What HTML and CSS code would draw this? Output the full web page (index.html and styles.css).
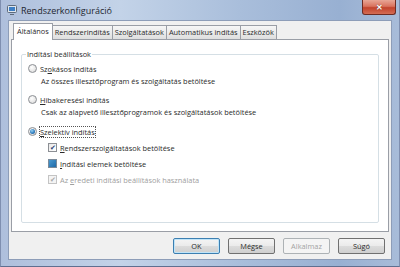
FILE: index.html
```html
<!DOCTYPE html>
<html lang="hu">
<head>
    <meta charset="UTF-8">
    <title>Rendszerkonfiguráció</title>
    <link rel="stylesheet" href="styles.css">
</head>
<body>
    <div class="window">
        <!-- Title bar -->
        <div class="titlebar">
            <svg class="app-icon" width="10" height="10" viewBox="0 0 10 10">
                <rect x="0.5" y="0.5" width="9" height="7" rx="1" fill="#dfe6ee" stroke="#5d6b7c"/>
                <rect x="2" y="2" width="6" height="4" fill="#3d7fc6"/>
                <path d="M3 9.5h4" stroke="#5d6b7c"/>
            </svg>
            <span class="title">Rendszerkonfiguráció</span>
            <div class="close-btn">&#x2715;</div>
        </div>

        <div class="body">
            <!-- Tabs -->
            <div class="tabs">
                <div class="tab active">Általános</div>
                <div class="tab">Rendszerindítás</div>
                <div class="tab">Szolgáltatások</div>
                <div class="tab">Automatikus indítás</div>
                <div class="tab">Eszközök</div>
            </div>

            <div class="panel">
                <fieldset class="group">
                    <legend>Indítási beállítások</legend>

                    <div class="option">
                        <span class="radio"></span>
                        <span>Sz<u>o</u>kásos indítás</span>
                    </div>
                    <div class="desc">Az összes illesztőprogram és szolgáltatás betöltése</div>

                    <div class="option spaced">
                        <span class="radio"></span>
                        <span><u>H</u>ibakeresési indítás</span>
                    </div>
                    <div class="desc">Csak az alapvető illesztőprogramok és szolgáltatások betöltése</div>

                    <div class="option spaced-lg">
                        <span class="radio checked"></span>
                        <span class="focus"><u>S</u>zelektív indítás</span>
                    </div>

                    <div class="sub-options">
                        <div class="option">
                            <span class="check checked">&#x2714;</span>
                            <span><u>R</u>endszerszolgáltatások betöltése</span>
                        </div>
                        <div class="option">
                            <span class="check mixed"></span>
                            <span><u>I</u>ndítási elemek betöltése</span>
                        </div>
                        <div class="option disabled">
                            <span class="check checked">&#x2714;</span>
                            <span>Az <u>e</u>redeti indítási beállítások használata</span>
                        </div>
                    </div>
                </fieldset>
            </div>

            <!-- Dialog buttons -->
            <div class="buttons">
                <button class="btn default">OK</button>
                <button class="btn">Mégse</button>
                <button class="btn" disabled>Alkalmaz</button>
                <button class="btn">Súgó</button>
            </div>
        </div>
    </div>
</body>
</html>
```

FILE: styles.css
```css
html, body {
    margin: 0;
    padding: 0;
}

body {
    font-family: "Open Sans", "Noto Sans", sans-serif;
    font-size: 7.4px;
    color: #2a2a2a;
}

.window {
    width: 400px;
    height: 267px;
    box-sizing: border-box;
    padding: 0 7px 6px 7px;
    display: flex;
    flex-direction: column;
    background: linear-gradient(90deg, #aebfdc 0%, #c3d3e8 30%, #a9bedb 60%, #98b0d2 85%, #a8bcd9 100%);
    border-left: 1px solid #7f8fb0;
    border-right: 1px solid #7f8fb0;
    border-bottom: 1px solid #5f6f90;
}

.titlebar {
    height: 20px;
    display: flex;
    align-items: center;
}

.app-icon {
    margin-left: -1px;
    margin-right: 4px;
}

.title {
    font-size: 9px;
    color: #1e2630;
    flex: 1;
}

.close-btn {
    align-self: flex-start;
    width: 32px;
    height: 14px;
    margin-right: -4px;
    border: 1px solid #6d2c24;
    border-top: none;
    border-radius: 0 0 3px 3px;
    background: linear-gradient(180deg, #e8a696 0%, #d9735f 45%, #c2432d 55%, #d46d55 100%);
    color: #fff;
    font-size: 8px;
    font-weight: bold;
    text-align: center;
    line-height: 13px;
    text-shadow: 0 0 1px #5a1a10;
}

.body {
    flex: 1;
    background: #f0f0f0;
    border: 1px solid #8d9db8;
    padding: 2px 2px 0 2px;
    display: flex;
    flex-direction: column;
}

.tabs {
    display: flex;
    align-items: flex-end;
    height: 16px;
    padding-left: 3px;
}

.tab {
    height: 13px;
    line-height: 13px;
    padding: 0 2px;
    border: 1px solid #9a9ea6;
    border-bottom: none;
    margin-left: -1px;
    background: linear-gradient(180deg, #f6f6f6 0%, #ebebeb 50%, #dedede 100%);
    white-space: nowrap;
}

.tab.active {
    height: 16px;
    line-height: 15px;
    padding: 0 3px;
    margin-bottom: -1px;
    background: #fff;
    position: relative;
    z-index: 1;
}

.panel {
    flex: 1;
    background: #fff;
    border: 1px solid #9a9ea6;
    padding: 9px 9px 8px 9px;
    display: flex;
    flex-direction: column;
}

.group {
    flex: 1;
    margin: 0;
    border: 1px solid #d5dfe5;
    border-radius: 2px;
    padding: 3px 0 0 6px;
}

.group legend {
    padding: 0 1px;
    margin-left: -2px;
    line-height: 10px;
}

.option {
    display: flex;
    align-items: center;
    height: 13px;
    gap: 3px;
}

.option.spaced {
    margin-top: 5px;
}

.option.spaced-lg {
    margin-top: 6px;
}

.desc {
    height: 13px;
    line-height: 13px;
    padding-left: 13px;
}

.radio {
    width: 7px;
    height: 7px;
    border-radius: 50%;
    border: 1px solid #8c8f94;
    background: radial-gradient(circle at 40% 35%, #ffffff 0%, #e6e6e6 60%, #cfcfcf 100%);
    position: relative;
}

.radio.checked::after {
    content: "";
    position: absolute;
    left: 1px;
    top: 1px;
    width: 5px;
    height: 5px;
    border-radius: 50%;
    background: radial-gradient(circle at 40% 35%, #9ad3f5 0%, #2f7fc1 55%, #1b4f8a 100%);
}

.focus {
    outline: 1px dotted #555;
    outline-offset: 0;
}

.sub-options {
    margin-top: 3px;
    padding-left: 20px;
    display: flex;
    flex-direction: column;
    gap: 3px;
}

.check {
    width: 7px;
    height: 7px;
    border: 1px solid #8c8f94;
    background: linear-gradient(135deg, #e8e8e8 0%, #ffffff 100%);
    font-size: 7px;
    line-height: 7px;
    text-align: center;
    color: #2b3f74;
    overflow: hidden;
}

.check.mixed {
    background: linear-gradient(135deg, #4a9ad0 0%, #1f6aa8 100%);
    border-color: #7a8a9a;
}

.option.disabled {
    color: #a0a0a0;
}

.option.disabled .check {
    color: #a8a8a8;
    border-color: #c4c4c4;
    background: #f4f4f4;
}

.buttons {
    display: flex;
    justify-content: flex-end;
    gap: 8px;
    margin: 6px 4px 5px 0;
}

.btn {
    width: 47px;
    height: 16px;
    padding: 0;
    font-family: inherit;
    font-size: 7.4px;
    color: #2a2a2a;
    border: 1px solid #707070;
    border-radius: 2px;
    background: linear-gradient(180deg, #f4f4f4 0%, #ebebeb 48%, #dcdcdc 52%, #cfcfcf 100%);
}

.btn.default {
    border-color: #3c7fb1;
    box-shadow: inset 0 0 0 1px #c0e4f8;
}

.btn:disabled {
    color: #a3a3a3;
    border-color: #adb2b5;
    background: #f4f4f4;
}
```
